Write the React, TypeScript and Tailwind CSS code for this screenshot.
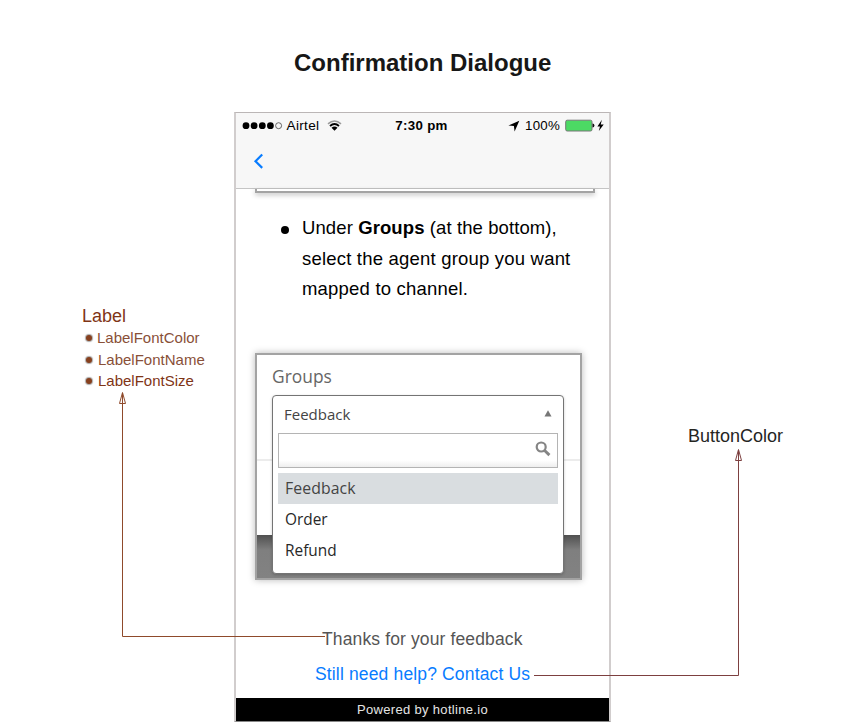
import React from "react";

function StatusBar() {
  return (
    <div className="flex h-[25px] items-center pl-[6px] pr-[5px] text-[13.3px] leading-[25px] text-black">
      <div className="flex flex-1 items-center">
        <svg width="42" height="10" viewBox="0 0 42 10">
          {[4, 12.1, 20.3, 28.4].map((x) => (
            <circle key={x} cx={x} cy="4.7" r="3.4" fill="#000" />
          ))}
          <circle cx="36.6" cy="4.7" r="3" fill="none" stroke="#444" strokeWidth="0.8" />
        </svg>
        <span className="ml-[2.6px] w-[34px] whitespace-nowrap text-[13.6px] tracking-[0.3px]">Airtel</span>
        <svg className="ml-[6px]" width="15" height="12" viewBox="0 0 15 12" fill="none">
          <path d="M1 3.9 Q7.5 -1.9 14 3.9" stroke="#999" strokeWidth="1.5" />
          <path d="M3 6 Q7.5 1.9 12 6" stroke="#000" strokeWidth="1.8" />
          <path d="M4.5 7.8 Q7.5 5.4 10.5 7.8 L7.5 10.8 Z" fill="#000" />
        </svg>
      </div>
      <span className="-ml-[3px] whitespace-nowrap font-bold tracking-[0.3px]">7:30 pm</span>
      <div className="flex flex-1 items-center justify-end">
        <svg width="12" height="12" viewBox="0 0 12 12">
          <path d="M11.3 0.8 L6.6 11.4 L5.9 6 L0.5 5.5 Z" fill="#000" />
        </svg>
        <span className="ml-[5px] w-[36px] whitespace-nowrap tracking-[0.25px]">100%</span>
        <svg className="ml-[4px]" width="39" height="14" viewBox="0 0 39 14">
          <rect x="0.7" y="1.2" width="26.3" height="10.8" rx="1.5" fill="#4cd964" stroke="#777" />
          <path d="M27.5 4.6 Q29.4 4.8 29.4 6.6 Q29.4 8.4 27.5 8.6 Z" fill="#111" />
          <path d="M36.9 0.8 L32.4 7.4 L35 7.4 L33.8 12.1 L38.7 5.4 L35.7 5.4 Z" fill="#000" />
        </svg>
      </div>
    </div>
  );
}

function GroupsPicker() {
  return (
    <div className="ml-[19px] mt-[48px] h-[227px] w-[327px] border-[2px] border-[#a3a3a3] bg-[linear-gradient(to_bottom,#fff_0px,#fff_104px,#ececec_104px,#ececec_106px,#fff_106px,#fff_180px,#505050_180px,#7f7f7f_195px,#828282_100%)] pl-[15px] font-['Open_Sans',sans-serif] shadow-[0_0_7px_rgba(0,0,0,0.28)]">
      <div className="h-[40px] text-[17.4px] leading-[42px] text-[#666]">Groups</div>
      <div className="h-[179px] w-[292px] rounded-[4px] border-[1.5px] border-[#747474] bg-white pl-[5px] pt-[1px] shadow-[0_1px_3px_rgba(0,0,0,0.2)]">
        <div className="flex h-[36px] items-center justify-between pl-[6px] pr-[11px] text-[15px] text-[#444]">
          <span className="-mt-[2px]">Feedback</span>
          <svg className="-mt-[4px]" width="8" height="7" viewBox="0 0 8 7">
            <path d="M4 0.3 L7.5 6.5 H0.5 Z" fill="#777" />
          </svg>
        </div>
        <div className="flex h-[35px] w-[280px] justify-end border-[1.5px] border-[#b4b4b4] bg-linear-to-b from-white from-80% to-[#eee] pr-[6px] pt-[7px]">
          <svg width="16" height="16" viewBox="0 0 16 16" fill="none" stroke="#858585">
            <circle cx="6.2" cy="6" r="4.5" strokeWidth="2.2" />
            <path d="M9.4 9.2 L14.4 14.1" strokeWidth="2.9" />
          </svg>
        </div>
        <div className="mt-[5px] h-[31px] w-[280px] bg-[#d9dde0] pl-[7px] text-[15.8px] leading-[30px] tracking-[0.1px] text-[#444]">Feedback</div>
        <div className="h-[32px] pl-[7px] text-[15.4px] leading-[31px] text-[#282828]">Order</div>
        <div className="h-[32px] pl-[7px] text-[15.4px] leading-[30px] text-[#282828]">Refund</div>
      </div>
    </div>
  );
}

function Phone() {
  return (
    <main className="flex h-[610px] w-[377px] flex-col border-x-2 border-y border-[#d1cdcd] border-t-[#bbb6b6] border-b-[#888] bg-white">
      <header className="h-[76px] border-b border-[#c5c5c5] bg-[#f7f7f7]">
        <StatusBar />
        <svg className="ml-[17px] mt-[14px]" width="12" height="18" viewBox="0 0 12 18" fill="none">
          <path d="M9.2 2.5 L2.5 9.2 L9.2 15.9" stroke="#087cff" strokeWidth="2.2" />
        </svg>
      </header>
      <div className="ml-[19px] h-[4px] w-[340px] border-x-2 border-b-2 border-[#a3a3a3] shadow-[0_2px_5px_rgba(0,0,0,0.25)]" />
      <div className="mt-[20px] flex h-[92px] pl-[45px] text-[18.5px] leading-[30.5px] tracking-[0.2px] text-black">
        <span className="mr-[13px] mt-[12.5px] size-[8px] shrink-0 rounded-full bg-black" />
        <p className="whitespace-nowrap">
          <span className="tracking-[0.1px]">Under <b>Groups</b> (at the bottom),</span><br />
          select the agent group you want<br />
          mapped to channel.
        </p>
      </div>
      <GroupsPicker />
      <div className="mt-[48px] pl-[86px] text-[17.5px] leading-[22px] tracking-[0.13px] text-[#555] whitespace-nowrap">Thanks for your feedback</div>
      <div className="mt-[13px] pl-[79px] text-[17.5px] leading-[22px] tracking-[0.15px] text-[#087cff] whitespace-nowrap">Still need help? Contact Us</div>
      <footer className="mt-auto h-[23px] bg-black pl-[121px] text-[13px] leading-[24px] tracking-[0.32px] text-[#e5e5e5] whitespace-nowrap">Powered by hotline.io</footer>
    </main>
  );
}

function Connectors() {
  return (
    <svg className="pointer-events-none absolute inset-0" width="863" height="722" fill="none">
      <g stroke="#8f4a2b">
        <path d="M325 636.5 H122.5 V393" />
        <path d="M119.5 403.5 L122.5 392.5 L125.5 403.5 Z" />
      </g>
      <g stroke="#7d4040">
        <path d="M534 675.5 H738.5 V450" />
        <path d="M735.5 460.5 L738.5 449.5 L741.5 460.5 Z" />
      </g>
    </svg>
  );
}

export default function App() {
  return (
    <div className="relative h-[722px] w-[863px] overflow-hidden bg-white font-['Liberation_Sans',Arial,sans-serif]">
      <h1 className="h-[112px] pl-[294px] pt-[48px] text-[24px] font-bold leading-[30px] text-[#171717] whitespace-nowrap">Confirmation Dialogue</h1>
      <div className="flex">
        <aside className="w-[234px] pl-[82px] pt-[193px] text-[#7f3516]">
          <div className="text-[18px] leading-[22px]">Label</div>
          <ul className="text-[15px] text-[#895038]">
            <li className="flex h-[22px] items-center pl-[4px]"><span className="mr-[5px] size-[6px] rounded-full bg-[#87401e] shadow-[0_0_1px_1px_#aaa]" />LabelFontColor</li>
            <li className="flex h-[22px] items-center pl-[4px]"><span className="mr-[6px] size-[6px] rounded-full bg-[#87401e] shadow-[0_0_1px_1px_#aaa]" />LabelFontName</li>
            <li className="flex h-[20px] items-center pl-[4px] text-[#7f3516]"><span className="mr-[6px] size-[6px] rounded-full bg-[#87401e] shadow-[0_0_1px_1px_#aaa]" />LabelFontSize</li>
          </ul>
        </aside>
        <Phone />
        <aside className="pl-[77px] pt-[313px] text-[18px] leading-[22px] text-[#25251f]">ButtonColor</aside>
      </div>
      <Connectors />
    </div>
  );
}
